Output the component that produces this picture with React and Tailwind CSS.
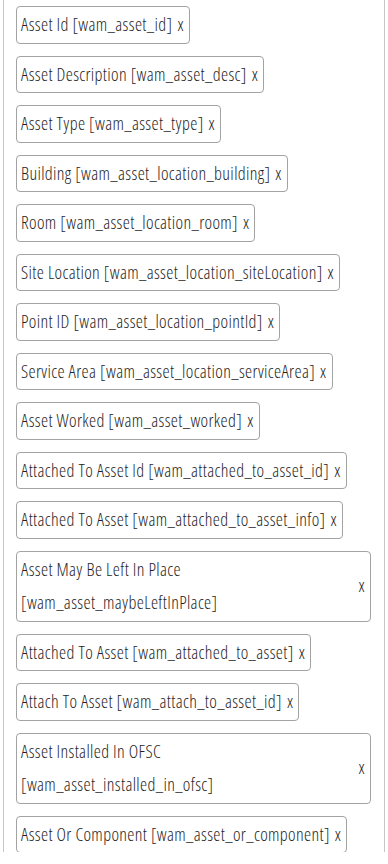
import React from "react";

const items = [
  "Asset Id [wam_asset_id]",
  "Asset Description [wam_asset_desc]",
  "Asset Type [wam_asset_type]",
  "Building [wam_asset_location_building]",
  "Room [wam_asset_location_room]",
  "Site Location [wam_asset_location_siteLocation]",
  "Point ID [wam_asset_location_pointId]",
  "Service Area [wam_asset_location_serviceArea]",
  "Asset Worked [wam_asset_worked]",
  "Attached To Asset Id [wam_attached_to_asset_id]",
  "Attached To Asset [wam_attached_to_asset_info]",
  "Asset May Be Left In Place [wam_asset_maybeLeftInPlace]",
  "Attached To Asset [wam_attached_to_asset]",
  "Attach To Asset [wam_attach_to_asset_id]",
  "Asset Installed In OFSC [wam_asset_installed_in_ofsc]",
  "Asset Or Component [wam_asset_or_component]",
];

function Chip({ label }) {
  return (
    <div className="inline-flex max-w-full items-center self-start rounded-[4px] border border-[#a3a3a3] bg-white py-px pl-[4px] pr-[5px]">
      <span className="min-w-0 flex-1">{label}</span>
      <span className="ml-[5px] shrink-0">x</span>
    </div>
  );
}

export default function App() {
  return (
    <div className="min-h-[864px] bg-white">
      <div className="mx-[3px] flex h-[852px] flex-col gap-3 overflow-hidden border-x border-[#c6c6c6] pl-3 pr-[13px] pt-[6px] font-['Open_Sans',sans-serif] text-[18px] font-light leading-[33.5px] tracking-[0.35px] text-[#1f1f1f] [font-stretch:condensed]">
        {items.map((t) => (
          <Chip key={t} label={t} />
        ))}
      </div>
    </div>
  );
}
